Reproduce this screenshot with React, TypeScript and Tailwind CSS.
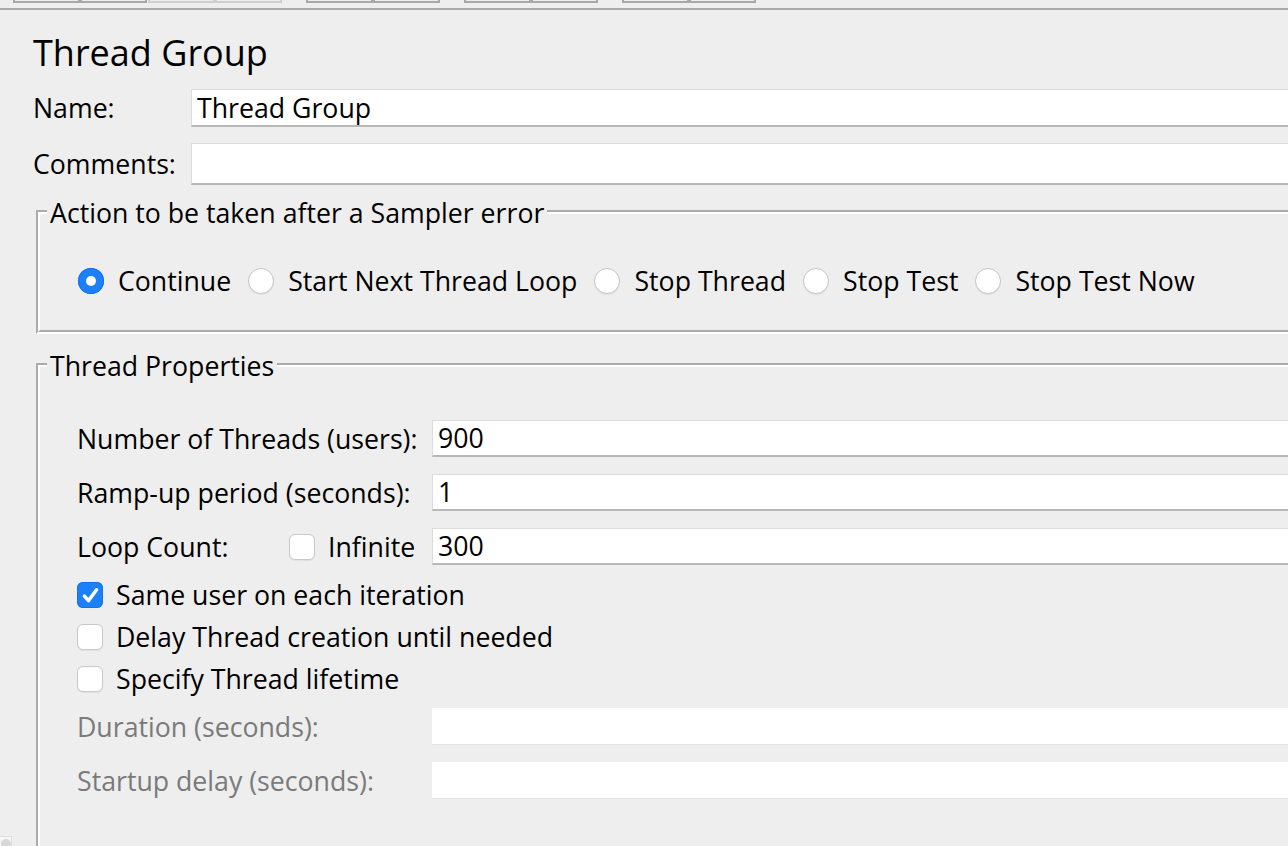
import type { ReactNode } from 'react';

function Radio({ checked }: { checked?: boolean }) {
  if (checked) {
    return (
      <span className="w-[26px] h-[26px] shrink-0 rounded-full bg-[#1b80fa] flex items-center justify-center shadow-[inset_0_0_0_1px_#1672e6]">
        <span className="w-[10px] h-[10px] rounded-full bg-white" />
      </span>
    );
  }
  return <span className="w-[26px] h-[26px] shrink-0 rounded-full bg-white border border-[#c6c6c6] shadow-[0_1px_1px_rgba(0,0,0,0.06)]" />;
}

function Checkbox({ checked }: { checked?: boolean }) {
  if (checked) {
    return (
      <span className="w-[26px] h-[26px] shrink-0 rounded-[6px] bg-[#1b80fa] flex items-center justify-center shadow-[inset_0_0_0_1px_#1672e6]">
        <svg viewBox="0 0 16 16" className="w-[21px] h-[21px]">
          <path d="M3.4 8.4 L6.5 11.9 L12.6 3.6" stroke="white" strokeWidth="2.6" fill="none" strokeLinecap="round" strokeLinejoin="round" />
        </svg>
      </span>
    );
  }
  return <span className="w-[26px] h-[26px] shrink-0 rounded-[6px] bg-white border border-[#c8c8c8] shadow-[0_1px_1px_rgba(0,0,0,0.06)]" />;
}

function Field({ value, className = 'h-[37px]', disabled }: { value?: string; className?: string; disabled?: boolean }) {
  return (
    <div
      className={`flex-1 flex items-center bg-white pl-[5px] ${className} ${
        disabled ? 'border-b border-[#e2e2e2]' : 'border-t border-l border-[#dcdcdc] border-b-2 border-b-[#b8b8b8]'
      }`}
    >
      {value}
    </div>
  );
}

function TabPair({ light, className = '' }: { light?: boolean; className?: string }) {
  const c = light ? 'border-[#cfcfcf]' : 'border-[#a8a8a8]';
  return (
    <div className={`flex ${className}`}>
      <div className={`w-[67px] h-[3px] border-x-2 border-b-2 ${c}`} />
      <div className={`w-[67px] h-[3px] border-x-2 border-b-2 ${c}`} />
    </div>
  );
}

function Group({ title, className, children }: { title: string; className: string; children: ReactNode }) {
  return (
    <fieldset className={`ml-[3px] mr-[-20px] border-4 border-white [border-style:groove] ${className}`}>
      <legend className="ml-[7px] px-[3px] pt-[2px] leading-[36px]">{title}</legend>
      {children}
    </fieldset>
  );
}

export default function App() {
  const radios = ['Continue', 'Start Next Thread Loop', 'Stop Thread', 'Stop Test', 'Stop Test Now'];

  return (
    <div className="relative h-[846px] w-full overflow-hidden bg-[#eeeeee] text-black font-['Open_Sans',sans-serif] text-[26.7px] leading-[36px]">
      {/* toolbar remnants */}
      <div className="h-[10px] flex items-start border-b-2 border-[#a9a9a9]">
        <TabPair className="ml-[13px]" />
        <TabPair light className="ml-[1px]" />
        <TabPair className="ml-[24px]" />
        <TabPair className="ml-[24px]" />
        <TabPair className="ml-[24px]" />
      </div>

      <div className="pl-[33px]">
        <h1 className="mt-[25px] text-[36px] leading-[36px]">Thread Group</h1>

        <div className="mt-[18px] flex items-center h-[38px]">
          <span className="w-[158px] shrink-0">Name:</span>
          <Field value="Thread Group" className="h-[38px]" />
        </div>
        <div className="mt-[16px] flex items-center h-[42px]">
          <span className="w-[158px] shrink-0">Comments:</span>
          <Field className="h-[42px]" />
        </div>

        <Group title="Action to be taken after a Sampler error" className="mt-[8px]">
          <div className="pl-[38px] pt-[32px] pb-[31px] flex items-center h-[36px] gap-[17px] box-content">
            {radios.map((r, i) => (
              <div key={r} className="flex items-center">
                <Radio checked={i === 0} />
                <span className="ml-[14px]">{r}</span>
              </div>
            ))}
          </div>
        </Group>

        <Group title="Thread Properties" className="mt-[12px]">
          <div className="pl-[37px] pt-[36px] pb-[60px] flex flex-col">
            <div className="flex items-center h-[37px]">
              <span className="w-[355px] shrink-0">Number of Threads (users):</span>
              <Field value="900" />
            </div>
            <div className="mt-[17px] flex items-center h-[37px]">
              <span className="w-[355px] shrink-0">Ramp-up period (seconds):</span>
              <Field value="1" />
            </div>
            <div className="mt-[17px] flex items-center h-[37px]">
              <div className="w-[355px] shrink-0 flex items-center">
                <span className="w-[212px] shrink-0">Loop Count:</span>
                <Checkbox />
                <span className="ml-[13px]">Infinite</span>
              </div>
              <Field value="300" />
            </div>

            <div className="mt-[12px] flex items-center h-[36px]">
              <Checkbox checked />
              <span className="ml-[13px]">Same user on each iteration</span>
            </div>
            <div className="mt-[6px] flex items-center h-[36px]">
              <Checkbox />
              <span className="ml-[13px]">Delay Thread creation until needed</span>
            </div>
            <div className="mt-[6px] flex items-center h-[36px]">
              <Checkbox />
              <span className="ml-[13px]">Specify Thread lifetime</span>
            </div>

            <div className="mt-[11px] flex items-center h-[37px]">
              <span className="w-[355px] shrink-0 text-[#7a7a7a]">Duration (seconds):</span>
              <Field disabled />
            </div>
            <div className="mt-[17px] flex items-center h-[37px]">
              <span className="w-[355px] shrink-0 text-[#7a7a7a]">Startup delay (seconds):</span>
              <Field disabled />
            </div>
          </div>
        </Group>
      </div>

      {/* split pane corner */}
      <div className="absolute left-0 bottom-0 w-[12px] h-[10px] bg-[#f6f6f6] border-t border-r border-[#dddddd] overflow-hidden">
        <div className="ml-[1px] mt-[2px] w-[10px] h-[10px] rounded-full bg-[#d8d8d8]" />
      </div>
    </div>
  );
}
